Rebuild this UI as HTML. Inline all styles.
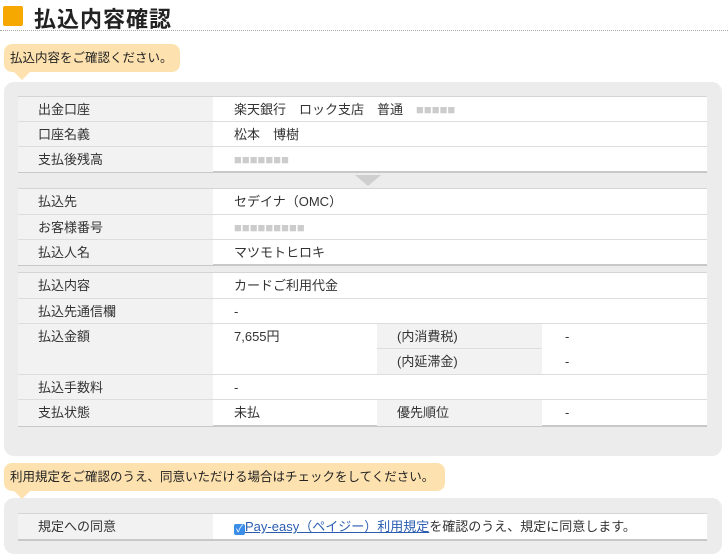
<!DOCTYPE html>
<html><head><meta charset="utf-8"><style>
*{margin:0;padding:0;box-sizing:border-box}
body{width:728px;height:558px;background:#fff;font-family:"Liberation Sans","Noto Sans CJK JP",sans-serif;font-size:13px;color:#333;position:relative;overflow:hidden}
.a{position:absolute}
.h1{left:34px;top:2px;font-size:22px;font-weight:bold;color:#222;letter-spacing:1px}
.sq{left:3px;top:6px;width:20px;height:20px;background:#f6a800;border-radius:2px}
.line{left:0;top:30px;width:728px;border-top:1px dotted #aaa}
.bub{background:#fde2b0;border-radius:8px;font-size:12.5px;color:#222;padding-left:6px;line-height:28px}
.tri{width:0;height:0;border-left:8px solid transparent;border-right:8px solid transparent;border-top:8px solid #fde2b0}
.panel{background:#ececec;border-radius:10px}
.tbl{background:#fff;border-top:1px solid #d5d5d5;border-bottom:2px solid #c8c8c8}
.r{position:absolute;left:0;right:0;border-bottom:1px solid #ddd}
.l{position:absolute;left:0;width:195px;top:0;bottom:0;background:#f2f2f2;padding-left:20px}
.v{position:absolute;left:216px;top:0}
.t{line-height:25px}
.sl{position:absolute;left:359px;width:165px;background:#f2f2f2;padding-left:20px}
.sv{position:absolute;left:547px}
</style></head><body>
<div class="a sq"></div>
<div class="a h1">払込内容確認</div>
<div class="a line"></div>

<div class="a panel" style="left:4px;top:82px;width:718px;height:374px"></div>
<div class="a bub" style="left:4px;top:44px;width:176px;height:28px">払込内容をご確認ください。</div>
<div class="a tri" style="left:14px;top:72px"></div>

<!-- group1 -->
<div class="a tbl" style="left:18px;top:96px;width:689px;height:77px">
 <div class="r t" style="top:0;height:25px"><div class="l">出金口座</div><div class="v">楽天銀行　ロック支店　普通　<span style="color:#ccc">■■■■■</span></div></div>
 <div class="r t" style="top:25px;height:25px"><div class="l">口座名義</div><div class="v">松本　博樹</div></div>
 <div class="r t" style="top:50px;height:25px;border:0"><div class="l">支払後残高</div><div class="v" style="color:#ccc">■■■■■■■</div></div>
</div>
<div class="a" style="left:355px;top:175px;width:0;height:0;border-left:13px solid transparent;border-right:13px solid transparent;border-top:11px solid #cfcfcf"></div>

<!-- group2 -->
<div class="a tbl" style="left:18px;top:188px;width:689px;height:78px">
 <div class="r t" style="top:0;height:26px"><div class="l">払込先</div><div class="v">セデイナ（OMC）</div></div>
 <div class="r t" style="top:26px;height:25px"><div class="l">お客様番号</div><div class="v" style="color:#ccc">■■■■■■■■■</div></div>
 <div class="r t" style="top:51px;height:25px;border:0"><div class="l">払込人名</div><div class="v">マツモトヒロキ</div></div>
</div>

<!-- group3 -->
<div class="a tbl" style="left:18px;top:272px;width:689px;height:155px">
 <div class="r t" style="top:0;height:26px"><div class="l">払込内容</div><div class="v">カードご利用代金</div></div>
 <div class="r t" style="top:26px;height:25px"><div class="l">払込先通信欄</div><div class="v">-</div></div>
 <div class="r t" style="top:51px;height:51px"><div class="l">払込金額</div><div class="v">7,655円</div>
   <div class="sl t" style="top:0;height:25px;border-bottom:1px solid #ddd">(内消費税)</div><div class="sv t" style="top:0">-</div>
   <div class="sl t" style="top:25px;height:25px">(内延滞金)</div><div class="sv t" style="top:25px">-</div>
 </div>
 <div class="r t" style="top:102px;height:25px"><div class="l">払込手数料</div><div class="v">-</div></div>
 <div class="r t" style="top:127px;height:26px;border:0"><div class="l">支払状態</div><div class="v">未払</div>
   <div class="sl t" style="top:0;height:26px">優先順位</div><div class="sv t" style="top:0">-</div></div>
</div>

<!-- agreement -->
<div class="a panel" style="left:4px;top:498px;width:718px;height:56px"></div>
<div class="a bub" style="left:4px;top:463px;width:441px;height:28px">利用規定をご確認のうえ、同意いただける場合はチェックをしてください。</div>
<div class="a tri" style="left:14px;top:491px"></div>
<div class="a tbl" style="left:18px;top:513px;width:689px;height:28px">
 <div class="r t" style="top:0;height:25px;border:0"><div class="l">規定への同意</div>
  <div class="v" style="left:216px"><span style="display:inline-block;width:11px;height:11px;background:#3b8ee8;border-radius:2px;color:#fff;font-size:10px;line-height:11px;text-align:center;vertical-align:-1px">✓</span><span style="color:#2a5db0;text-decoration:underline">Pay-easy（ペイジー）利用規定</span>を確認のうえ、規定に同意します。</div></div>
</div>
</body></html>
